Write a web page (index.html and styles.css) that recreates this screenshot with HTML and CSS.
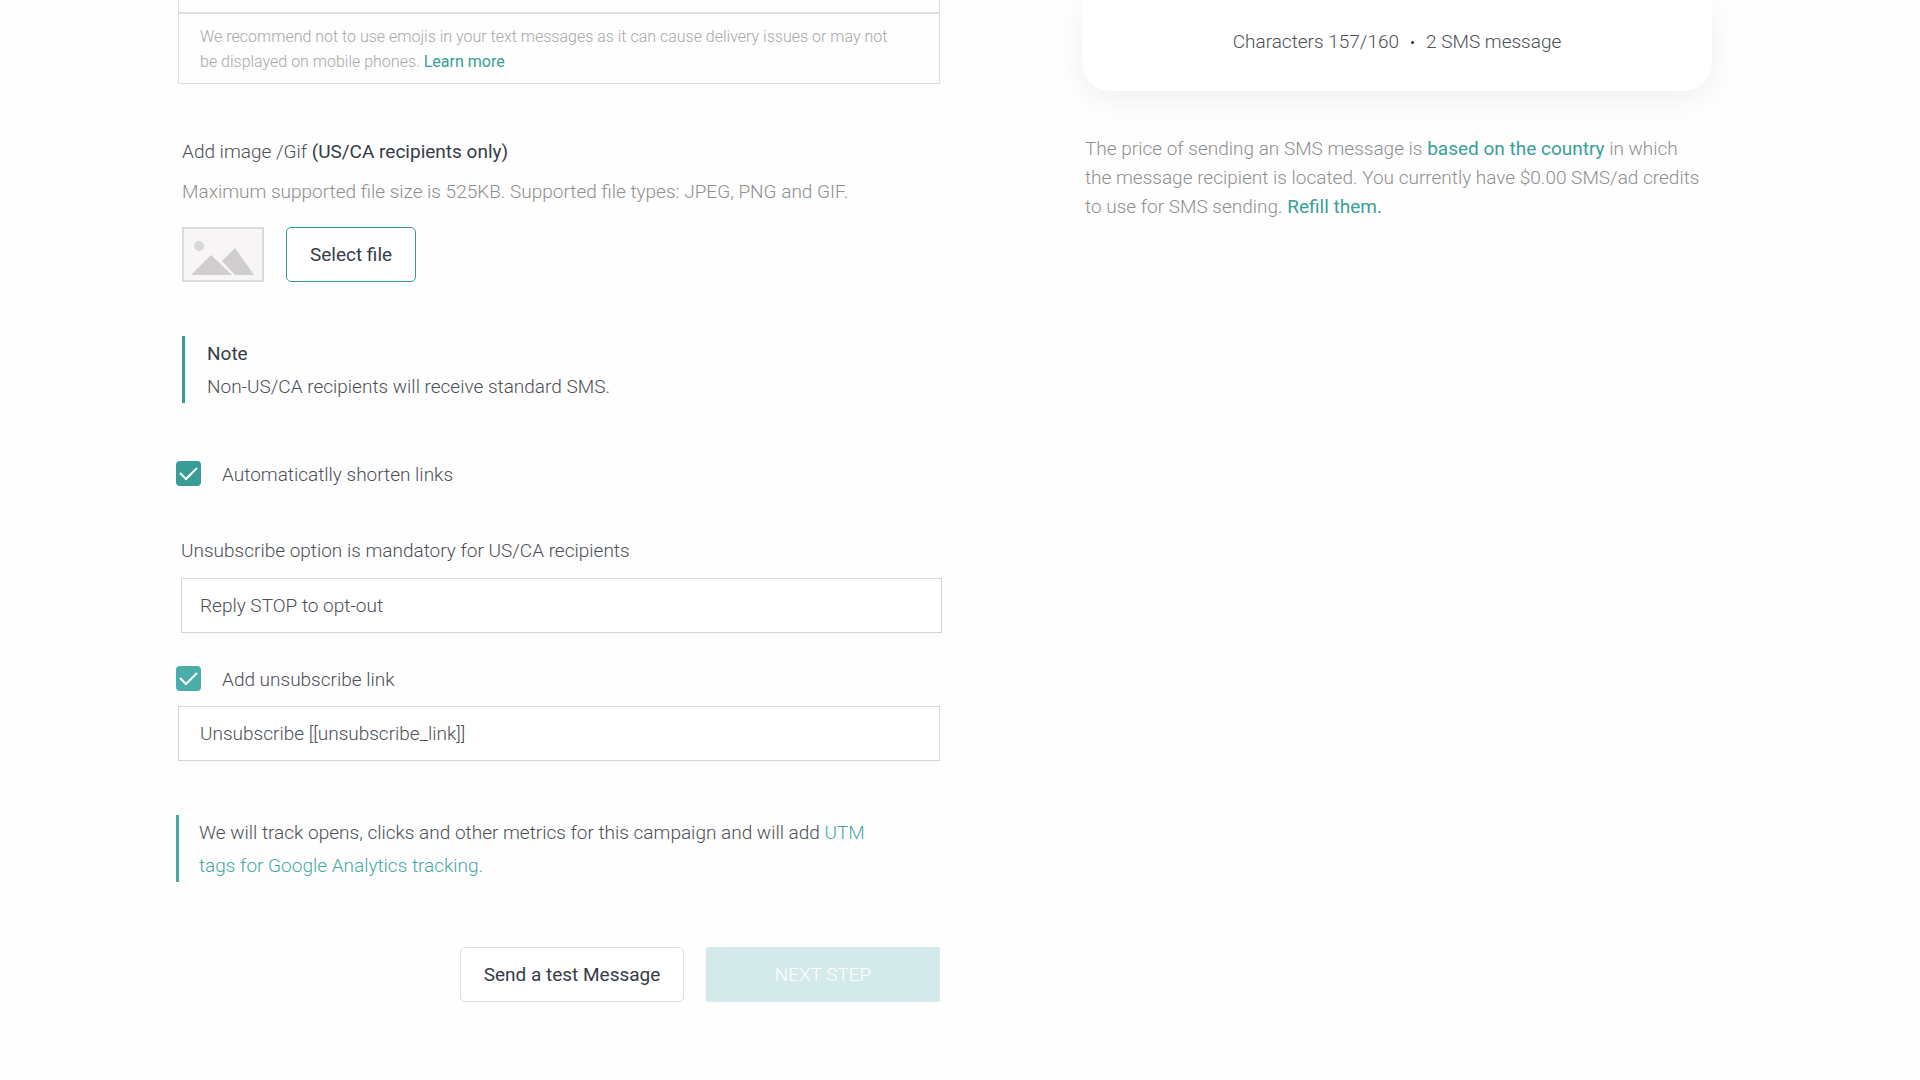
FILE: index.html
```html
<!DOCTYPE html>
<html lang="en">
<head>
	<meta charset="UTF-8">
	<title>SMS campaign</title>
	<link rel="stylesheet" href="styles.css">
</head>
<body>
	<div class="page">
		<form class="form">
			<div class="message-box">
				<div class="message-end"></div>
				<p class="message-tip">We recommend not to use emojis in your text messages as it can cause delivery issues or may not be displayed on mobile phones. <a class="strong" href="#">Learn more</a></p>
			</div>

			<section class="upload">
				<p>Add image /Gif <span class="dark">(US/CA recipients only)</span></p>
				<p class="hint">Maximum supported file size is 525KB. Supported file types: JPEG, PNG and GIF.</p>
				<div class="upload-row">
					<svg class="thumb" viewBox="0 0 82 55">
						<rect x="1" y="1" width="80" height="53" fill="#f7f5f6" stroke="#dcdadb" stroke-width="2"/>
						<circle cx="17" cy="19" r="5" fill="#d9d7d8"/>
						<path d="M9 48 29 28 50 48z" fill="#cfcdce"/>
						<path d="M40 34 53 21 72 48H53z" fill="#cfcdce"/>
					</svg>
					<button type="button" class="btn btn-select">Select file</button>
				</div>
			</section>

			<div class="note">
				<p class="dark">Note</p>
				<p>Non-US/CA recipients will receive standard SMS.</p>
			</div>

			<label class="check check-shorten">
				<input type="checkbox" checked>
				<span>Automaticatlly shorten links</span>
			</label>

			<div class="field">
				<label for="optout">Unsubscribe option is mandatory for US/CA recipients</label>
				<input type="text" id="optout" value="Reply STOP to opt-out">
			</div>

			<label class="check check-unsubscribe">
				<input type="checkbox" checked>
				<span>Add unsubscribe link</span>
			</label>
			<input type="text" class="link-text" aria-label="Unsubscribe link text" value="Unsubscribe [[unsubscribe_link]]">

			<p class="tracking">We will track opens, clicks and other metrics for this campaign and will add <a href="#">UTM tags for Google Analytics tracking.</a></p>

			<div class="actions">
				<button type="button" class="btn btn-test">Send a test Message</button>
				<button type="submit" class="btn btn-next" disabled>NEXT STEP</button>
			</div>
		</form>

		<aside class="preview">
			<div class="card">
				<span>Characters 157/160</span>
				<span class="dot"></span>
				<span>2 SMS message</span>
			</div>
			<p class="price">The price of sending an SMS message is <a class="strong" href="#">based on the country</a> in which the message recipient is located. You currently have $0.00 SMS/ad credits to use for SMS sending. <a class="strong" href="#">Refill them.</a></p>
		</aside>
	</div>
</body>
</html>
```
FILE: styles.css
```css
* {
	box-sizing: border-box;
}
body {
	margin: 0;
	background-color: #fefefe;
	font-family: Roboto, "Liberation Sans", sans-serif;
	font-size: 19px;
	font-weight: 300;
	line-height: 24px;
	color: #4b4f57;
}
p {
	margin: 0;
}
a {
	color: #45a8a3;
	text-decoration: none;
}
.strong {
	font-weight: 400;
	color: #36a099;
}
.dark {
	font-weight: 400;
	color: #343c47;
}
.page {
	display: grid;
	grid-template-columns: 766fr 630fr;
	align-items: start;
	gap: 140px;
	padding: 0 208px 76px 176px;
}

/* left column */
.form {
	display: flex;
	flex-direction: column;
}
.message-box {
	margin: 0 2px;
	border: 1px solid #dcdcdc;
	border-top: 0;
}
.message-end {
	height: 14px;
	border-bottom: 2px solid #e0e0e0;
}
.message-tip {
	padding: 10px 40px 9px 21px;
	font-size: 16px;
	line-height: 25px;
	color: #a8a8a8;
}
.upload {
	margin: 56px 6px 0;
}
.hint {
	margin-top: 16px;
	color: #8f8f8f;
}
.upload-row {
	display: flex;
	gap: 22px;
	margin-top: 23px;
}
.thumb {
	width: 82px;
	height: 55px;
}
.btn {
	height: 55px;
	padding: 0;
	border: 1px solid #e0e1e3;
	border-radius: 5px;
	background-color: #fff;
	font: inherit;
	font-weight: 400;
	white-space: nowrap;
	color: #343c47;
}
.btn-select {
	width: 130px;
	border-color: #3a9c98;
}
.note,
.tracking {
	padding-top: 1px;
	padding-left: 22px;
	border-left: 3px solid #3a9c98;
	line-height: 33px;
}
.note {
	margin: 54px 6px 0;
}
.check {
	display: flex;
	align-items: center;
	gap: 21px;
	line-height: 25px;
}
.check span {
	padding-top: 2px;
}
.check input {
	width: 25px;
	height: 25px;
	margin: 0;
	appearance: none;
	border-radius: 4px;
	background: #3a9c98 url('data:image/svg+xml,<svg xmlns="http://www.w3.org/2000/svg" viewBox="0 0 25 25"><path d="M4 12l6 6L21 7" fill="none" stroke="white" stroke-width="2"/></svg>');
}
.check-shorten {
	margin-top: 57px;
}
.field {
	display: flex;
	flex-direction: column;
	gap: 15px;
	margin: 52px 0 0 5px;
}
input[type="text"] {
	height: 55px;
	padding: 0 18px;
	border: 1px solid #d4d5d7;
	border-radius: 0;
	background-color: #fff;
	font: inherit;
	color: inherit;
}
.check-unsubscribe {
	margin-top: 32px;
}
.check-unsubscribe input {
	background-color: #4badaa;
}
.form .link-text {
	margin: 14px 2px 0;
	padding: 0 21px;
}
.tracking {
	margin-top: 54px;
	padding-left: 20px;
	padding-right: 50px;
	border-color: #45a8a3;
}
.actions {
	display: flex;
	justify-content: flex-end;
	gap: 22px;
	margin: 65px 2px 0;
}
.btn-test {
	width: 224px;
}
.btn-next {
	width: 234px;
	border: 0;
	border-radius: 2px;
	background-color: #d4eaea;
	font-weight: 300;
	color: #fff;
}

/* right column */
.card {
	display: flex;
	justify-content: center;
	align-items: center;
	gap: 12px;
	padding: 30px 0 37px;
	border-radius: 0 0 28px 28px;
	background-color: #fff;
	box-shadow: 0 8px 32px rgba(0, 0, 0, 0.06);
}
.dot {
	width: 3px;
	height: 3px;
	border-radius: 50%;
	background-color: #333;
}
.price {
	padding: 43px 8px 0 3px;
	line-height: 29px;
	color: #8f8f8f;
}
```
